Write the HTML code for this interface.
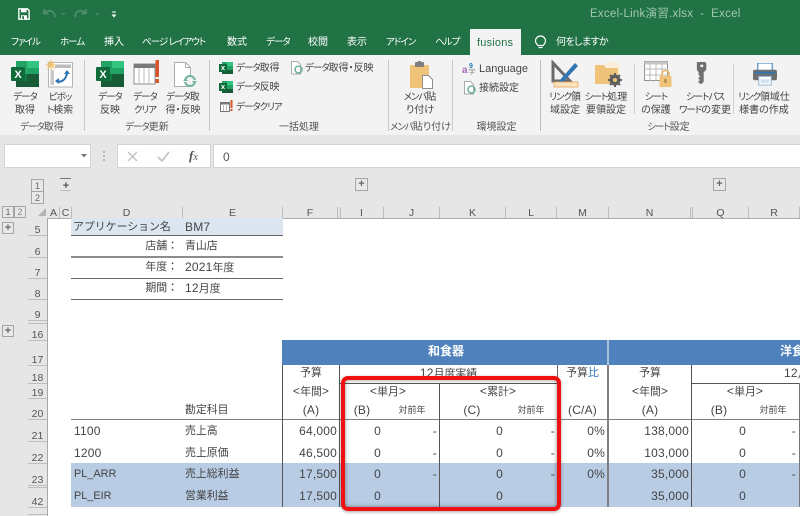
<!DOCTYPE html>
<html lang="ja"><head><meta charset="utf-8">
<style>
html,body{margin:0;padding:0;background:#fff}
#p{position:relative;width:800px;height:516px;overflow:hidden;background:#fff;font-family:"Liberation Sans","Noto Sans CJK JP",sans-serif;color:#444;filter:blur(.3px)}
#p div,#p svg{position:absolute}
.t{white-space:nowrap;line-height:14px;height:14px}
.c{text-align:center}
.r{text-align:right}
.k{font-size:9.5px;letter-spacing:-1px}
.tab{color:#fff;font-size:10px;top:36px;font-feature-settings:"palt"}
.rb{font-size:10px;color:#444;text-align:center;white-space:nowrap;line-height:13px;height:13px;margin-top:1px;font-feature-settings:"palt"}
.grp{font-size:10px;color:#555;text-align:center;white-space:nowrap;line-height:14px;height:14px;top:121px;font-feature-settings:"palt"}
.sm{font-size:10px;color:#444;font-feature-settings:"palt"}
.sep{background:#c8c8c8;width:1px;top:60px;height:71px}
.cell{font-size:12px;letter-spacing:.2px;color:#444;white-space:nowrap;line-height:14px;height:14px;margin-top:1px}
.j{font-size:10.9px;letter-spacing:0}
.h{font-size:10.5px;color:#555;top:206px;height:13px;line-height:14px;text-align:center}
.hb{background:#bbb;width:1px;top:207px;height:11px}
.rn{font-size:10.5px;color:#555;left:28px;width:19px;text-align:center;line-height:12px;height:12px;margin-top:1px}
.rl{background:#bdbdbd;height:1px;left:28px;width:19px}
.box{background:#e8e8e8;border:1px solid #a5a5a5;box-sizing:border-box;font-size:9px;color:#666;text-align:center}
</style></head><body><div id="p">

<!-- title bar -->
<div style="left:0;top:0;width:800px;height:55px;background:#217346"></div>
<svg style="left:18px;top:8px" width="12" height="12" viewBox="0 0 14 14"><path d="M1 1h10l2 2v10H1z" fill="none" stroke="#fff" stroke-width="1.600"/><rect x="3.500" y="1" width="6.500" height="4" fill="#fff"/><rect x="3.500" y="8.500" width="7" height="4.500" fill="#fff"/><rect x="5" y="9.500" width="2" height="3.500" fill="#217346"/></svg>
<svg style="left:42px;top:8px" width="60" height="12" viewBox="0 0 60 12" fill="none" stroke="#4f9070" stroke-width="1.700"><path d="M2 1v4.500h4.500M2.500 5C6 1 13 2.500 13 9"/><path d="M44 1v4.500h-4.500M43.500 5C40 1 33 2.500 33 9"/><path d="M20 5l1.500 1.500L23 5M54 5l1.500 1.500L57 5" stroke-width="1"/></svg>
<svg style="left:111px;top:11px" width="6" height="7" viewBox="0 0 6 7"><path d="M1 1h4" stroke="#fff" stroke-width="1"/><path d="M.5 3.500h5L3 6.500z" fill="#fff"/></svg>
<div class="t" style="left:590px;top:7px;font-size:11.500px;color:#a3c7b3;letter-spacing:.25px">Excel-Link演習.xlsx&nbsp; - &nbsp;Excel</div>

<!-- tabs -->
<div class="t tab" style="left:11px"><span class="k">ファイル</span></div>
<div class="t tab" style="left:60px"><span class="k">ホーム</span></div>
<div class="t tab" style="left:104px">挿入</div>
<div class="t tab" style="left:142px"><span class="k">ページ レイアウト</span></div>
<div class="t tab" style="left:227px">数式</div>
<div class="t tab" style="left:266px"><span class="k">データ</span></div>
<div class="t tab" style="left:308px">校閲</div>
<div class="t tab" style="left:347px">表示</div>
<div class="t tab" style="left:386px"><span class="k">アドイン</span></div>
<div class="t tab" style="left:435px"><span class="k">ヘルプ</span></div>
<div style="left:470px;top:29px;width:51px;height:26px;background:#f3f3f3"></div>
<div class="t tab" style="left:477px;color:#217346;font-size:11px;letter-spacing:.2px">fusions</div>
<svg style="left:534px;top:35px" width="13" height="15" viewBox="0 0 13 15" fill="none" stroke="#fff" stroke-width="1.200"><path d="M4 10.500C2.500 9 1.500 7.500 1.500 6a5 5 0 0 1 10 0c0 1.500-1 3-2.500 4.500z"/><path d="M4.500 12.500h4"/></svg>
<div class="t tab" style="left:556px;letter-spacing:-.6px">何をしますか</div>

<!-- ribbon -->
<div style="left:0;top:55px;width:800px;height:80px;background:#f3f3f3"></div>
<div style="left:0;top:135px;width:800px;height:83px;background:#e6e6e6"></div>

<!-- big excel icons -->
<svg style="left:11px;top:61px" width="28" height="26" viewBox="0 0 28 26"><rect x="5" y="0" width="23" height="26" fill="#21a366"/><rect x="16" y="0" width="12" height="7" fill="#33c481"/><rect x="5" y="13" width="11" height="7" fill="#107c41"/><rect x="16" y="13" width="12" height="7" fill="#185c37"/><rect x="5" y="20" width="23" height="6" fill="#185c37"/><rect x="0" y="6" width="14" height="14" rx="1" fill="#0f6b3a"/><text x="7" y="17" font-family="Liberation Sans" font-size="11" font-weight="bold" fill="#fff" text-anchor="middle">X</text></svg>
<svg style="left:96px;top:61px" width="28" height="26" viewBox="0 0 28 26"><rect x="5" y="0" width="23" height="26" fill="#21a366"/><rect x="16" y="0" width="12" height="7" fill="#33c481"/><rect x="5" y="13" width="11" height="7" fill="#107c41"/><rect x="16" y="13" width="12" height="7" fill="#185c37"/><rect x="5" y="20" width="23" height="6" fill="#185c37"/><rect x="0" y="6" width="14" height="14" rx="1" fill="#0f6b3a"/><text x="7" y="17" font-family="Liberation Sans" font-size="11" font-weight="bold" fill="#fff" text-anchor="middle">X</text></svg>
<!-- pivot -->
<svg style="left:46px;top:60px" width="28" height="28" viewBox="0 0 28 28"><rect x="2.500" y="2.500" width="24" height="24.500" fill="#fff" stroke="#b5b5b5"/><rect x="9" y="4.500" width="16" height="3.500" fill="#bdbdbd"/><rect x="4.500" y="10" width="3.500" height="15" fill="#c9c9c9"/><path d="M10 21c5 2 10-1 11-8" fill="none" stroke="#2e75b6" stroke-width="2"/><path d="M18 14l3-4 3 4zM13 18l-4 3 4 3z" fill="#2e75b6"/><path d="M5 0v10M0 5h10M1.500 1.500l7 7M8.500 1.500l-7 7" stroke="#f0c070" stroke-width="1.300"/></svg>
<!-- clear table -->
<svg style="left:133px;top:60px" width="28" height="27" viewBox="0 0 28 27"><rect x="1" y="4" width="21" height="20" fill="#fff" stroke="#8f8f8f"/><rect x="1" y="4" width="21" height="4" fill="#7a7a7a"/><path d="M6 8v16M11 8v16M16 8v16" stroke="#bbb"/><rect x="22.500" y="0" width="3.500" height="17" fill="#d9542b"/><rect x="22.500" y="19" width="3.500" height="4" fill="#d9542b"/></svg>
<!-- doc refresh -->
<svg style="left:173px;top:61px" width="26" height="28" viewBox="0 0 26 28"><path d="M1.500 1.500h11l5 5v19h-16z" fill="#fff" stroke="#adadad"/><path d="M12.500 1.500v5h5" fill="none" stroke="#adadad"/><circle cx="17" cy="20" r="5" fill="#f3f3f3" stroke="#6fb39a" stroke-width="2"/><rect x="10" y="19" width="14" height="2" fill="#f3f3f3"/><path d="M10 20l3-2.500 2 2.500zM24 20l-3 2.500-2-2.500z" fill="#6fb39a"/></svg>
<div class="rb" style="left:0;width:50px;top:90px"><span class="k">データ</span></div>
<div class="rb" style="left:0;width:50px;top:103px">取得</div>
<div class="rb" style="left:40px;width:40px;top:90px"><span class="k">ピボッ</span></div>
<div class="rb" style="left:40px;width:40px;top:103px"><span class="k">ト</span>検索</div>
<div class="rb" style="left:85px;width:50px;top:90px"><span class="k">データ</span></div>
<div class="rb" style="left:85px;width:50px;top:103px">反映</div>
<div class="rb" style="left:120px;width:50px;top:90px"><span class="k">データ</span></div>
<div class="rb" style="left:120px;width:50px;top:103px"><span class="k">クリア</span></div>
<div class="rb" style="left:158px;width:50px;top:90px"><span class="k">データ</span>取</div>
<div class="rb" style="left:158px;width:50px;top:103px">得・反映</div>
<div class="grp" style="left:0;width:84px"><span class="k">データ</span>取得</div>
<div class="grp" style="left:85px;width:124px"><span class="k">データ</span>更新</div>
<div class="sep" style="left:84px"></div><div class="sep" style="left:209px"></div>

<!-- small excel buttons -->
<svg style="left:219px;top:62px" width="14" height="12" viewBox="0 0 14 12"><rect x="3" width="11" height="12" fill="#21a366"/><rect x="8" width="6" height="4" fill="#33c481"/><rect x="3" y="8" width="11" height="4" fill="#185c37"/><rect y="2" width="8" height="8" fill="#0f6b3a"/><path d="M2.500 4l3 4M5.500 4l-3 4" stroke="#fff"/></svg>
<svg style="left:219px;top:81px" width="14" height="12" viewBox="0 0 14 12"><rect x="3" width="11" height="12" fill="#21a366"/><rect x="8" width="6" height="4" fill="#33c481"/><rect x="3" y="8" width="11" height="4" fill="#185c37"/><rect y="2" width="8" height="8" fill="#0f6b3a"/><path d="M2.500 4l3 4M5.500 4l-3 4" stroke="#fff"/></svg>
<svg style="left:220px;top:100px" width="13" height="13" viewBox="0 0 13 13"><rect x=".5" y="2.500" width="9" height="9" fill="#fff" stroke="#777"/><rect x=".5" y="2.500" width="9" height="2" fill="#777"/><path d="M3.500 4v7M6.500 4v7" stroke="#bbb"/><rect x="10.500" y="0" width="2" height="8" fill="#d9542b"/><rect x="10.500" y="9" width="2" height="2" fill="#d9542b"/></svg>
<div class="t sm" style="left:236px;top:62px"><span class="k">データ</span>取得</div>
<div class="t sm" style="left:236px;top:81px"><span class="k">データ</span>反映</div>
<div class="t sm" style="left:236px;top:101px"><span class="k">データクリア</span></div>
<svg style="left:290px;top:61px" width="14" height="14" viewBox="0 0 14 14"><path d="M1.500.5h6l3 3v9.500h-9z" fill="#fff" stroke="#aaa"/><circle cx="8.500" cy="8.500" r="3.500" fill="none" stroke="#6fb39a" stroke-width="1.600"/></svg>
<div class="t sm" style="left:305px;top:62px"><span class="k">データ</span>取得・反映</div>
<div class="grp" style="left:210px;width:178px">一括処理</div>
<div class="sep" style="left:388px"></div>

<!-- paste -->
<svg style="left:409px;top:60px" width="26" height="30" viewBox="0 0 26 30"><rect x="1" y="5" width="19" height="23" fill="#efc47a"/><rect x="6" y="2" width="9" height="5" rx="1" fill="#7f7f7f"/><rect x="9" y="1" width="3" height="2" fill="#7f7f7f"/><path d="M13.500 15.500h6l4 4v9h-10z" fill="#fff" stroke="#8f8f8f"/></svg>
<div class="rb" style="left:392px;width:56px;top:90px"><span class="k">メンバ</span>貼</div>
<div class="rb" style="left:392px;width:56px;top:103px">り付け</div>
<div class="grp" style="left:389px;width:63px"><span class="k">メンバ</span>貼り付け</div>
<div class="sep" style="left:452px"></div>

<svg style="left:462px;top:61px" width="14" height="14" viewBox="0 0 14 14"><text x="0" y="12" font-family="Liberation Sans" font-size="10" font-weight="bold" fill="#a66bc0">a</text><text x="7" y="7" font-family="Liberation Sans" font-size="7" font-weight="bold" fill="#2e75b6">9</text><text x="7" y="13" font-family="Noto Sans CJK JP" font-size="6" fill="#666">字</text></svg>
<div class="t" style="left:479px;top:62px;font-size:11px;color:#444">Language</div>
<svg style="left:463px;top:81px" width="14" height="14" viewBox="0 0 14 14"><path d="M1.500.5h6l3 3v9.500h-9z" fill="#fff" stroke="#aaa"/><circle cx="8.500" cy="8.500" r="3.500" fill="none" stroke="#6fb39a" stroke-width="1.600"/></svg>
<div class="t sm" style="left:479px;top:82px">接続設定</div>
<div class="grp" style="left:453px;width:87px">環境設定</div>
<div class="sep" style="left:540px;background:#bdbdbd"></div>

<!-- sheet group -->
<svg style="left:551px;top:60px" width="28" height="28" viewBox="0 0 28 28"><path d="M2 3l0 18 17 0z" fill="none" stroke="#6b6b6b" stroke-width="3"/><path d="M8 21L24 3l3 3L12 22z" fill="#2e75b6"/><rect x="3" y="22" width="24" height="5" fill="#fbe3c0" stroke="#e9a860" stroke-width=".8"/></svg>
<svg style="left:595px;top:62px" width="28" height="26" viewBox="0 0 28 26"><path d="M0 3h9l2 3h12v16H0z" fill="#efc47a"/><path d="M11 0h11l3 3v10H11z" fill="#fbeed8"/><path d="M0 6h23v16H0z" fill="#efc47a"/><circle cx="20" cy="18" r="5.500" fill="#5f5f5f"/><path d="M20 11v14M13 18h14M15 13l10 10M25 13L15 23" stroke="#5f5f5f" stroke-width="2"/><circle cx="20" cy="18" r="2" fill="#efc47a"/></svg>
<svg style="left:644px;top:61px" width="28" height="28" viewBox="0 0 28 28"><rect x=".5" y=".5" width="23" height="19" fill="#fff" stroke="#8f8f8f"/><rect x=".5" y=".5" width="23" height="3" fill="#c8c8c8"/><path d="M6 0v20M12 0v20M18 0v20M0 8h24M0 14h24" stroke="#bbb"/><path d="M18 16v-3a3.500 3.500 0 0 1 7 0v3" fill="none" stroke="#e9b45f" stroke-width="1.600"/><rect x="15.500" y="15" width="12" height="11" fill="#efc47a"/><rect x="20.500" y="18" width="2" height="4" fill="#a9823e"/></svg>
<svg style="left:696px;top:61px" width="12" height="26" viewBox="0 0 14 28"><path d="M1 0h10l1 2v7l-3 3v11l-3 3-3-2v-2l2-1-2-1v-2l2-1-2-2v-3L1 9z" fill="#707070"/><rect x="5" y="3" width="3.500" height="3" rx="1" fill="#f3f3f3"/></svg>
<svg style="left:752px;top:63px" width="26" height="23" viewBox="0 0 27 24"><rect x="6" y="0" width="15" height="9" fill="#fff" stroke="#2e75b6"/><rect x="1" y="7" width="25" height="11" rx="2" fill="#6e6e6e"/><rect x="3" y="9" width="21" height="2" fill="#2e75b6"/><rect x="7" y="14" width="13" height="9" fill="#fff" stroke="#8fb4d8"/><rect x="9" y="17" width="9" height="4" fill="#cfe0f0"/></svg>
<div class="rb" style="left:542px;width:46px;top:90px"><span class="k">リンク</span>領</div>
<div class="rb" style="left:542px;width:46px;top:103px">域設定</div>
<div class="rb" style="left:581px;width:50px;top:90px"><span class="k">シート</span>処理</div>
<div class="rb" style="left:581px;width:50px;top:103px">要領設定</div>
<div class="rb" style="left:636px;width:40px;top:90px"><span class="k">シート</span></div>
<div class="rb" style="left:636px;width:40px;top:103px">の保護</div>
<div class="rb" style="left:675px;width:60px;top:90px"><span class="k">シートパス</span></div>
<div class="rb" style="left:675px;width:60px;top:103px"><span class="k">ワード</span>の変更</div>
<div class="rb" style="left:735px;width:58px;top:90px"><span class="k">リンク</span>領域仕</div>
<div class="rb" style="left:735px;width:58px;top:103px">様書の作成</div>
<div class="grp" style="left:541px;width:255px"><span class="k">シート</span>設定</div>
<div class="sep" style="left:634px;top:64px;height:50px;background:#d0d0d0"></div>
<div class="sep" style="left:733px;top:64px;height:50px;background:#d0d0d0"></div>

<!-- formula bar -->
<div style="left:4px;top:144px;width:87px;height:24px;background:#fff;border:1px solid #d4d4d4;box-sizing:border-box"></div>
<svg style="left:81px;top:154px" width="6" height="4"><path d="M0 0h6L3 3.500z" fill="#777"/></svg>
<svg style="left:102px;top:150px" width="4" height="12"><path d="M2 1v2M2 5v2M2 9v2" stroke="#aaa" stroke-width="1.600"/></svg>
<div style="left:117px;top:144px;width:94px;height:24px;background:#fff;border:1px solid #d4d4d4;box-sizing:border-box"></div>
<svg style="left:127px;top:151px" width="11" height="11" viewBox="0 0 11 11"><path d="M1 1l9 9M10 1l-9 9" stroke="#c4c4c4" stroke-width="1.500"/></svg>
<svg style="left:157px;top:151px" width="13" height="11" viewBox="0 0 13 11"><path d="M1 6l4 4 7-9" fill="none" stroke="#c4c4c4" stroke-width="1.800"/></svg>
<div class="t" style="left:189px;top:149px;font-family:'Liberation Serif',serif;font-style:italic;font-size:13px;color:#555"><b>f</b><span style="font-size:10px">x</span></div>
<div style="left:213px;top:144px;width:587px;height:24px;background:#fff;border:1px solid #d4d4d4;border-right:0;box-sizing:border-box"></div>
<div class="t" style="left:223px;top:150px;font-size:12px;color:#555">0</div>

<!-- outline -->
<div class="box" style="left:31px;top:179px;width:13px;height:13px;line-height:12px">1</div>
<div class="box" style="left:31px;top:191px;width:13px;height:13px;line-height:12px">2</div>
<div style="left:60px;top:178px;width:11px;height:1px;background:#777"></div>
<div class="t c" style="left:60px;top:179px;width:12px;font-size:11px;color:#555;font-weight:bold">+</div>
<div style="left:60px;top:190px;width:11px;height:1px;background:#bbb"></div>
<div class="box" style="left:355px;top:178px;width:13px;height:13px;line-height:11px;font-size:11px;font-weight:bold">+</div>
<div class="box" style="left:713px;top:178px;width:13px;height:13px;line-height:11px;font-size:11px;font-weight:bold">+</div>
<div class="box" style="left:2px;top:206px;width:12px;height:12px;line-height:10px">1</div>
<div class="box" style="left:14px;top:206px;width:12px;height:12px;line-height:10px;color:#888">2</div>
<div style="left:0;top:218px;width:47px;height:298px;background:#e6e6e6"></div>
<div class="box" style="left:2px;top:222px;width:12px;height:12px;line-height:10px;font-size:11px;font-weight:bold">+</div>
<div class="box" style="left:2px;top:325px;width:12px;height:12px;line-height:10px;font-size:11px;font-weight:bold">+</div>
<div style="left:47px;top:218px;width:1px;height:298px;background:#a8a8a8"></div>
<div style="left:47px;top:218px;width:753px;height:1px;background:#adadad"></div>
<svg style="left:38px;top:208px" width="9" height="9"><path d="M8 0v8H0z" fill="#b5b5b5"/></svg>

<!-- column headers -->
<div class="h" style="left:48px;width:11px">A</div>
<div class="h" style="left:60px;width:11px">C</div>
<div class="h" style="left:71px;width:111px">D</div>
<div class="h" style="left:183px;width:99px">E</div>
<div class="h" style="left:283px;width:54px">F</div>
<div class="h" style="left:340px;width:43px">I</div>
<div class="h" style="left:384px;width:55px">J</div>
<div class="h" style="left:440px;width:65px">K</div>
<div class="h" style="left:506px;width:50px">L</div>
<div class="h" style="left:557px;width:51px">M</div>
<div class="h" style="left:609px;width:81px">N</div>
<div class="h" style="left:693px;width:55px">Q</div>
<div class="h" style="left:749px;width:50px">R</div>
<div class="hb" style="left:59px"></div><div class="hb" style="left:71px"></div><div class="hb" style="left:182px"></div><div class="hb" style="left:282px"></div><div class="hb" style="left:337px"></div><div class="hb" style="left:340px"></div><div class="hb" style="left:383px"></div><div class="hb" style="left:439px"></div><div class="hb" style="left:505px"></div><div class="hb" style="left:556px"></div><div class="hb" style="left:608px"></div><div class="hb" style="left:690px"></div><div class="hb" style="left:692px"></div><div class="hb" style="left:748px"></div><div class="hb" style="left:799px"></div>

<!-- row headers -->
<div class="rn" style="top:223px">5</div><div class="rl" style="top:235px"></div>
<div class="rn" style="top:245px">6</div><div class="rl" style="top:257px"></div>
<div class="rn" style="top:266px">7</div><div class="rl" style="top:278px"></div>
<div class="rn" style="top:287px">8</div><div class="rl" style="top:299px"></div>
<div class="rn" style="top:308px">9</div><div class="rl" style="top:320px"></div><div class="rl" style="top:323px"></div>
<div class="rn" style="top:328px">16</div><div class="rl" style="top:340px"></div>
<div class="rn" style="top:353px">17</div><div class="rl" style="top:365px"></div>
<div class="rn" style="top:371px">18</div><div class="rl" style="top:383px"></div>
<div class="rn" style="top:386px">19</div><div class="rl" style="top:398px"></div>
<div class="rn" style="top:407px">20</div><div class="rl" style="top:419px"></div>
<div class="rn" style="top:429px">21</div><div class="rl" style="top:441px"></div>
<div class="rn" style="top:451px">22</div><div class="rl" style="top:463px"></div>
<div class="rn" style="top:473px">23</div><div class="rl" style="top:485px"></div><div class="rl" style="top:487px"></div>
<div class="rn" style="top:495px">42</div><div class="rl" style="top:507px"></div>
<div class="rl" style="top:514px"></div>

<!-- top info table -->
<div style="left:71px;top:218px;width:212px;height:17px;background:#dce6f1"></div>
<div style="left:71px;top:235px;width:212px;height:1px;background:#666"></div>
<div style="left:71px;top:256px;width:212px;height:2px;background:#8c8c8c"></div>
<div style="left:71px;top:278px;width:212px;height:1px;background:#666"></div>
<div style="left:71px;top:299px;width:212px;height:1px;background:#666"></div>
<div class="cell j" style="left:73px;top:219px">アプリケーション名</div>
<div class="cell" style="left:185px;top:219px">BM7</div>
<div class="cell j r" style="left:100px;width:78px;top:238px">店舗：</div>
<div class="cell j" style="left:185px;top:238px">青山店</div>
<div class="cell j r" style="left:100px;width:78px;top:259px">年度：</div>
<div class="cell" style="left:185px;top:259px">2021<span class="j">年度</span></div>
<div class="cell j r" style="left:100px;width:78px;top:280px">期間：</div>
<div class="cell" style="left:185px;top:280px">12<span class="j">月度</span></div>

<!-- main table backgrounds -->
<div style="left:282px;top:340px;width:518px;height:25px;background:#4f81bd"></div>
<div style="left:607px;top:340px;width:2px;height:25px;background:#a9c1de"></div>
<div style="left:71px;top:463px;width:729px;height:44px;background:#b8cce4"></div>
<div style="left:71px;top:419px;width:729px;height:1px;background:#808080"></div>
<div style="left:340px;top:383px;width:217px;height:1px;background:#555"></div>
<div style="left:691px;top:383px;width:109px;height:1px;background:#555"></div>
<div style="left:282px;top:365px;width:1px;height:142px;background:#555"></div>
<div style="left:339px;top:365px;width:1px;height:142px;background:#555"></div>
<div style="left:439px;top:383px;width:1px;height:124px;background:#555"></div>
<div style="left:557px;top:365px;width:1px;height:142px;background:#666"></div>
<div style="left:607px;top:365px;width:2px;height:142px;background:#808080"></div>
<div style="left:691px;top:365px;width:1px;height:142px;background:#555"></div>
<div style="left:799px;top:383px;width:1px;height:124px;background:#777"></div>

<!-- header text -->
<div class="t c" style="left:400px;width:92px;top:344px;font-size:12px;font-weight:bold;color:#fff">和食器</div>
<div class="t" style="left:780px;top:344px;font-size:12px;font-weight:bold;color:#fff">洋食器</div>
<div class="cell c" style="left:400px;width:97px;top:365px">12<span class="j">月度実績</span></div>
<div class="cell" style="left:784px;top:365px">12<span class="j">月度実績</span></div>
<div class="cell j c" style="left:283px;width:56px;top:365px">予算</div>
<div class="cell c" style="left:283px;width:56px;top:383px">&lt;<span class="j">年間</span>&gt;</div>
<div class="cell c" style="left:283px;width:56px;top:402px">(A)</div>
<div class="cell j" style="left:185px;top:402px">勘定科目</div>
<div class="cell c" style="left:358px;width:60px;top:383px">&lt;<span class="j">単月</span>&gt;</div>
<div class="cell c" style="left:468px;width:60px;top:383px">&lt;<span class="j">累計</span>&gt;</div>
<div class="cell c" style="left:342px;width:40px;top:402px">(B)</div>
<div class="t c" style="left:392px;width:40px;top:403px;font-size:9px">対前年</div>
<div class="cell c" style="left:452px;width:40px;top:402px">(C)</div>
<div class="t c" style="left:511px;width:40px;top:403px;font-size:9px">対前年</div>
<div class="cell j c" style="left:558px;width:49px;top:365px">予算<span style="color:#2e75b6">比</span></div>
<div class="cell c" style="left:558px;width:49px;top:402px">(C/A)</div>
<div class="cell j c" style="left:609px;width:82px;top:365px">予算</div>
<div class="cell c" style="left:609px;width:82px;top:383px">&lt;<span class="j">年間</span>&gt;</div>
<div class="cell c" style="left:609px;width:82px;top:402px">(A)</div>
<div class="cell c" style="left:715px;width:60px;top:383px">&lt;<span class="j">単月</span>&gt;</div>
<div class="cell c" style="left:699px;width:40px;top:402px">(B)</div>
<div class="t c" style="left:753px;width:40px;top:403px;font-size:9px">対前年</div>

<!-- data rows -->
<div class="cell" style="left:74px;top:423px">1100</div><div class="cell j" style="left:185px;top:423px">売上高</div>
<div class="cell" style="left:74px;top:445px">1200</div><div class="cell j" style="left:185px;top:445px">売上原価</div>
<div class="cell j" style="left:74px;top:466px">PL_ARR</div><div class="cell j" style="left:185px;top:466px">売上総利益</div>
<div class="cell j" style="left:74px;top:488px">PL_EIR</div><div class="cell j" style="left:185px;top:488px">営業利益</div>
<div class="cell r" style="left:283px;width:54px;top:423px">64,000</div>
<div class="cell r" style="left:283px;width:54px;top:445px">46,500</div>
<div class="cell r" style="left:283px;width:54px;top:466px">17,500</div>
<div class="cell r" style="left:283px;width:54px;top:488px">17,500</div>

<div class="cell r" style="left:340px;width:41px;top:423px">0</div><div class="cell r" style="left:340px;width:41px;top:445px">0</div><div class="cell r" style="left:340px;width:41px;top:466px">0</div><div class="cell r" style="left:340px;width:41px;top:488px">0</div>
<div class="cell r" style="left:400px;width:37px;top:423px">-</div><div class="cell r" style="left:400px;width:37px;top:445px">-</div><div class="cell r" style="left:400px;width:37px;top:466px">-</div>
<div class="cell r" style="left:440px;width:63px;top:423px">0</div><div class="cell r" style="left:440px;width:63px;top:445px">0</div><div class="cell r" style="left:440px;width:63px;top:466px">0</div><div class="cell r" style="left:440px;width:63px;top:488px">0</div>
<div class="cell r" style="left:520px;width:35px;top:423px">-</div><div class="cell r" style="left:520px;width:35px;top:445px">-</div><div class="cell r" style="left:520px;width:35px;top:466px">-</div>
<div class="cell r" style="left:558px;width:47px;top:423px">0%</div><div class="cell r" style="left:558px;width:47px;top:445px">0%</div><div class="cell r" style="left:558px;width:47px;top:466px">0%</div>
<div class="cell r" style="left:609px;width:80px;top:423px">138,000</div><div class="cell r" style="left:609px;width:80px;top:445px">103,000</div><div class="cell r" style="left:609px;width:80px;top:466px">35,000</div><div class="cell r" style="left:609px;width:80px;top:488px">35,000</div>
<div class="cell r" style="left:692px;width:54px;top:423px">0</div><div class="cell r" style="left:692px;width:54px;top:445px">0</div><div class="cell r" style="left:692px;width:54px;top:466px">0</div><div class="cell r" style="left:692px;width:54px;top:488px">0</div>
<div class="cell r" style="left:760px;width:36px;top:423px">-</div><div class="cell r" style="left:760px;width:36px;top:445px">-</div><div class="cell r" style="left:760px;width:36px;top:466px">-</div>

<!-- red highlight -->
<div style="left:341px;top:376px;width:220px;height:135px;box-sizing:border-box;border:4px solid #f01010;border-radius:7px;box-shadow:0 1px 3px rgba(0,0,0,.35),inset 0 0 4px rgba(0,0,0,.45)"></div>
</div></body></html>
